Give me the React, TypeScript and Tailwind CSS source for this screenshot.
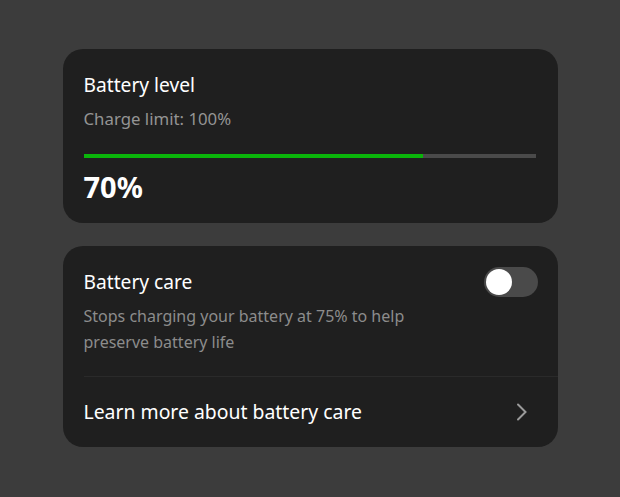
export default function App() {
  return (
    <div
      className="w-[620px] h-[497px] bg-[#3c3c3c] flex flex-col items-center pt-[49px] gap-[23px]"
      style={{ fontFamily: "'Noto Sans', 'Open Sans', sans-serif" }}
    >
      {/* battery level */}
      <div className="w-[495px] h-[174px] rounded-[20px] bg-[#1f1f1f] px-[21px] pt-[22px]">
        <div className="text-[19.2px] leading-[28px] text-white">Battery level</div>
        <div className="mt-[9px] text-[16.8px] leading-[22px] text-[#949494]">Charge limit: 100%</div>
        <div className="mt-[24px] h-[4px] w-[452px] bg-[#4a4a4a] flex">
          <div className="h-full w-[339px] bg-[#0ab50a]" />
        </div>
        <div className="mt-[12px] text-[29px] leading-[34px] font-bold text-white">70%</div>
      </div>

      {/* battery care */}
      <div className="w-[495px] h-[201px] rounded-[20px] bg-[#1f1f1f] flex flex-col">
        <div className="pl-[21px] pr-[20px] pt-[22px] pb-[21px]">
          <div className="flex items-start justify-between">
            <div className="text-[19.2px] leading-[28px] text-white">Battery care</div>
            <div className="w-[54px] h-[30px] rounded-full bg-[#4a4a4a] flex items-center px-[2px] mt-[-1px]">
              <div className="w-[26px] h-[26px] rounded-full bg-white" />
            </div>
          </div>
          <div className="mt-[6px] w-[340px] text-[16px] leading-[26px] text-[#8c8c8c]">
            Stops charging your battery at 75% to help preserve battery life
          </div>
        </div>
        <div className="ml-[21px] h-px bg-[#2a2a2a]" />
        <div className="flex-1 flex items-center justify-between pl-[21px] pr-[30px]">
          <div className="text-[19.4px] leading-[28px] text-white">Learn more about battery care</div>
          <svg width="12" height="18" viewBox="0 0 12 18" fill="none" stroke="#9a9a9a" strokeWidth="2" strokeLinecap="round">
            <path d="M2 1.5 L9.5 9 L2 16.5" />
          </svg>
        </div>
      </div>
    </div>
  );
}
